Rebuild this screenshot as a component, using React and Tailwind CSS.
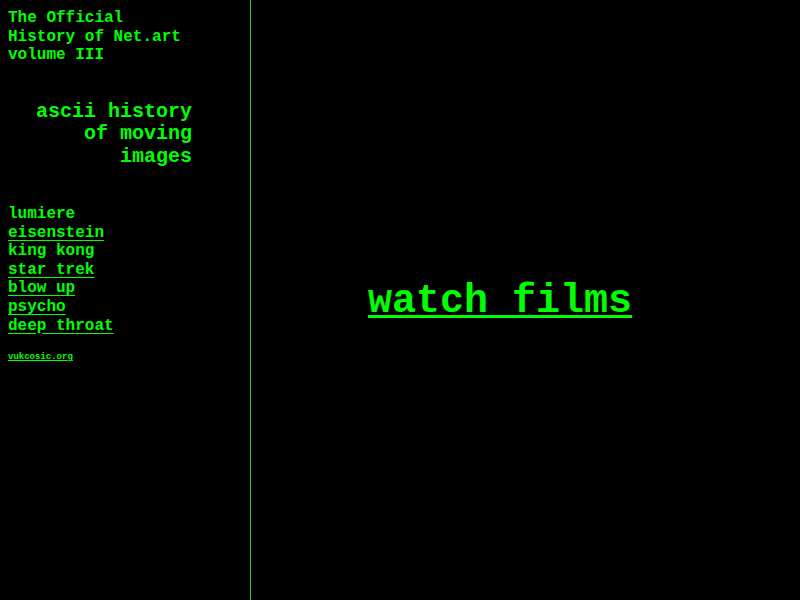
export default function App() {
  const mono = { fontFamily: '"Liberation Mono", "Courier New", monospace' };
  const items = [
    ["lumiere", false],
    ["eisenstein", true],
    ["king kong", false],
    ["star trek", true],
    ["blow up", true],
    ["psycho", true],
    ["deep throat", true],
  ];
  return (
    <div className="flex h-[600px] w-[800px] bg-black text-[#00ff00] font-bold" style={mono}>
      <div className="w-[251px] shrink-0 border-r border-[#33cc33] pl-2 pt-[9px]">
        <div className="text-[16px] leading-[18.5px]">
          <div>The Official</div>
          <div>History of Net.art</div>
          <div>volume III</div>
        </div>
        <div className="mt-[36px] w-[184px] text-right text-[20px] leading-[22.5px]">
          <div>ascii history</div>
          <div>of moving</div>
          <div>images</div>
        </div>
        <div className="mt-[37px] text-[16px] leading-[18.6px]">
          {items.map(([t, u]) => (
            <div key={t}>
              <span className={u ? "underline underline-offset-[3px]" : ""}>{t}</span>
            </div>
          ))}
        </div>
        <div className="mt-[17px] text-[9px] leading-[10px]">
          <span className="underline">vukcosic.org</span>
        </div>
      </div>
      <div className="flex flex-1 items-center pl-[117px] pt-[3px]">
        <span className="text-[40px] leading-[46px] underline decoration-[3px] underline-offset-[3px]">watch films</span>
      </div>
    </div>
  );
}
